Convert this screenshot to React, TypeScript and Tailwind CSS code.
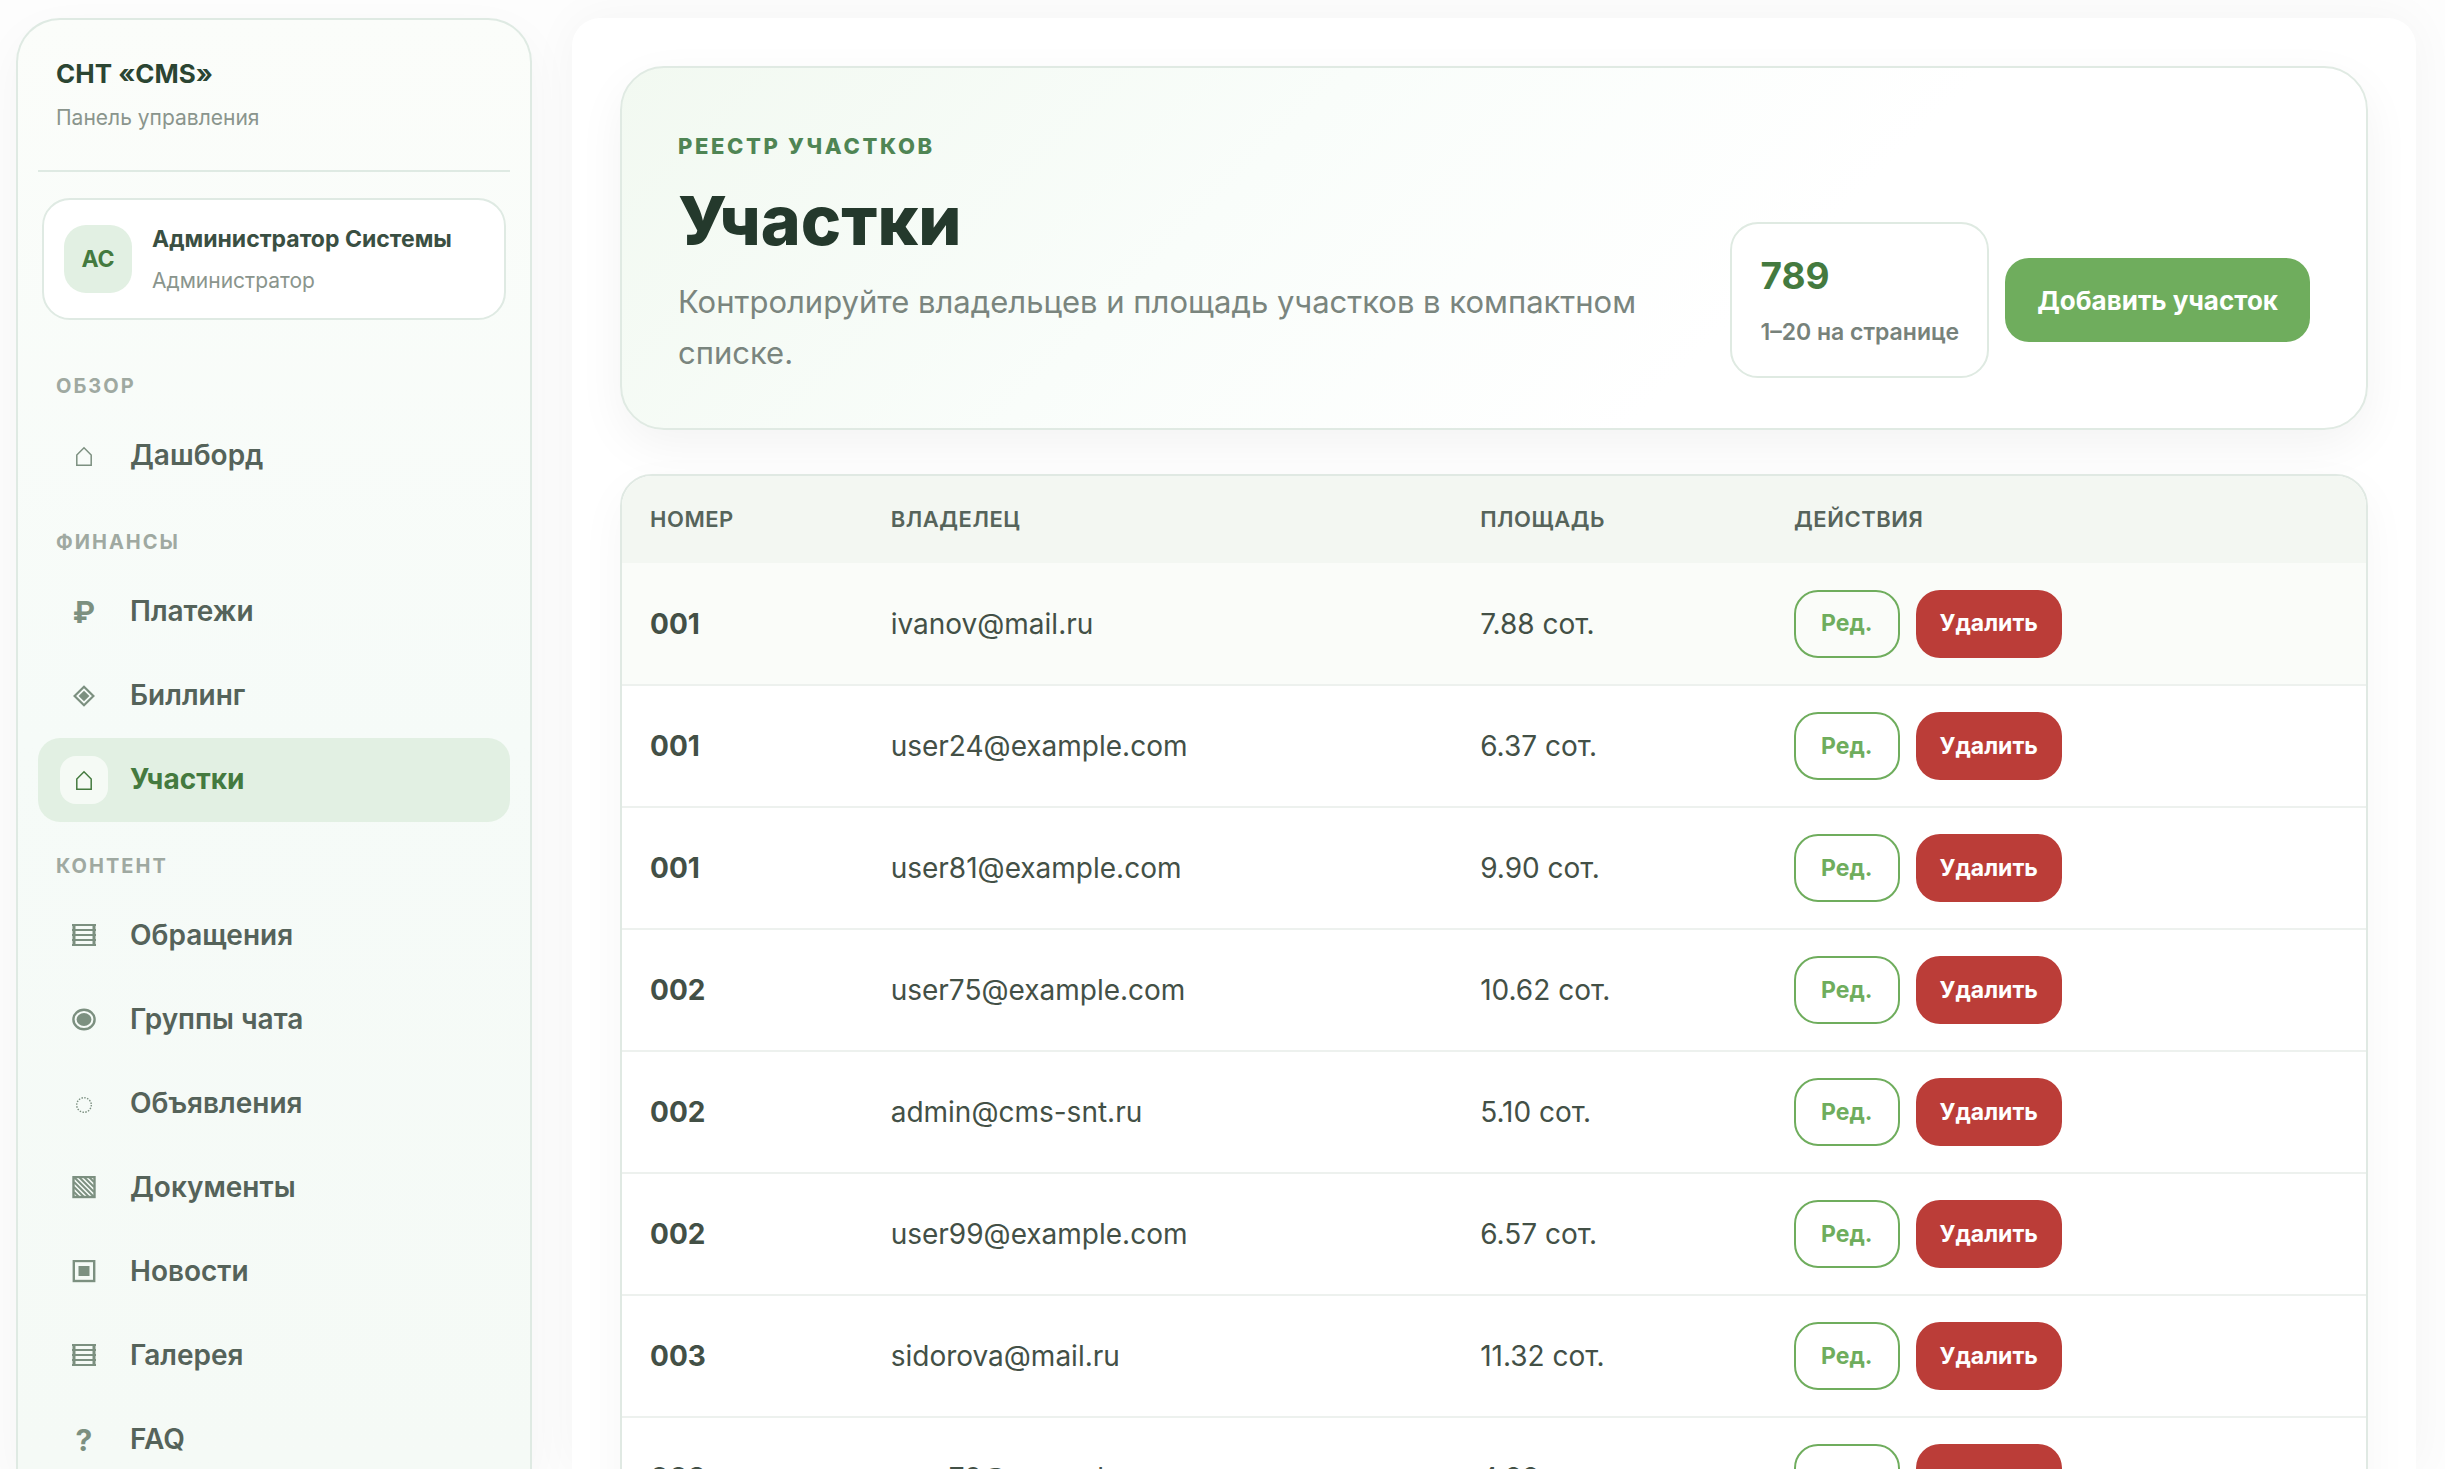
import { useState, type ReactNode } from 'react'

function cn(...xs: (string | false | undefined | null)[]) {
  return xs.filter(Boolean).join(' ')
}

const Glyph = ({ children }: { children: ReactNode }) => (
  <svg viewBox="0 0 24 24" fill="none" stroke="currentColor" className="h-6 w-6">
    {children}
  </svg>
)

const HomeIcon = () => (
  <Glyph>
    <path d="M4.8 21.3V11L12 3.8l7.2 7.2v10.3z" strokeWidth="1.5" />
  </Glyph>
)

const DiamondIcon = () => (
  <Glyph>
    <path d="M12 2.8 21.4 12 12 21.2 2.6 12z" strokeWidth="2.2" />
    <path d="M12 6.8 17.4 12 12 17.2 6.6 12z" fill="currentColor" stroke="none" />
  </Glyph>
)

const LinesIcon = () => (
  <Glyph>
    <path d="M0 0h24v2H0zM0 5h24v2H0zM0 10h24v2H0zM0 15h24v2H0zM0 20h24v2H0zM0.5 0h3v22h-3zM20.5 0h3v22h-3z" fill="currentColor" stroke="none" />
  </Glyph>
)

const TargetIcon = () => (
  <Glyph>
    <ellipse cx="12" cy="11.5" rx="10.6" ry="9.8" strokeWidth="2.4" />
    <ellipse cx="12" cy="11.5" rx="7.4" ry="6.4" fill="currentColor" stroke="none" />
  </Glyph>
)

const DottedIcon = () => (
  <Glyph>
    <circle cx="12" cy="13" r="7.3" strokeWidth="1.4" strokeDasharray="1.5 1.37" />
  </Glyph>
)

const HatchIcon = () => (
  <Glyph>
    <rect x="1.5" y="1" width="21" height="20" strokeWidth="2.4" />
    <path d="M2 1l20 20M2 6l15 15M2 11l10 10M2 16l5 5M7 1l15 15M12 1l10 10M17 1l5 5" strokeWidth="1.9" />
  </Glyph>
)

const SquareIcon = () => (
  <Glyph>
    <rect x="1.8" y="1" width="20.4" height="20" strokeWidth="2.4" />
    <path d="M6.5 6h11v10h-11z" fill="currentColor" stroke="none" />
  </Glyph>
)

interface NavItem {
  id: string
  icon: ReactNode
  label: string
}

interface Plot {
  number: string
  owner: string
  area: string
}

const navSections: { title: string; items: NavItem[] }[] = [
  { title: 'Обзор', items: [{ id: 'dashboard', icon: <HomeIcon />, label: 'Дашборд' }] },
  {
    title: 'Финансы',
    items: [
      { id: 'payments', icon: '₽', label: 'Платежи' },
      { id: 'billing', icon: <DiamondIcon />, label: 'Биллинг' },
      { id: 'plots', icon: <HomeIcon />, label: 'Участки' },
    ],
  },
  {
    title: 'Контент',
    items: [
      { id: 'appeals', icon: <LinesIcon />, label: 'Обращения' },
      { id: 'chats', icon: <TargetIcon />, label: 'Группы чата' },
      { id: 'announcements', icon: <DottedIcon />, label: 'Объявления' },
      { id: 'documents', icon: <HatchIcon />, label: 'Документы' },
      { id: 'news', icon: <SquareIcon />, label: 'Новости' },
      { id: 'gallery', icon: <LinesIcon />, label: 'Галерея' },
      { id: 'faq', icon: '?', label: 'FAQ' },
    ],
  },
]

const plots: Plot[] = [
  { number: '001', owner: 'ivanov@mail.ru', area: '7.88' },
  { number: '001', owner: 'user24@example.com', area: '6.37' },
  { number: '001', owner: 'user81@example.com', area: '9.90' },
  { number: '002', owner: 'user75@example.com', area: '10.62' },
  { number: '002', owner: 'admin@cms-snt.ru', area: '5.10' },
  { number: '002', owner: 'user99@example.com', area: '6.57' },
  { number: '003', owner: 'sidorova@mail.ru', area: '11.32' },
  { number: '003', owner: 'user79@example.com', area: '4.88' },
]

function Sidebar() {
  const [active, setActive] = useState('plots')

  return (
    <aside className="w-[516px] shrink-0 overflow-hidden rounded-t-[44px] border-2 border-b-0 border-[#dfeae3] bg-linear-to-b from-[#fbfdfa] via-[#f6fbf8] via-50% to-[#f5faf6] px-5 pt-5 shadow-[0_16px_48px_rgba(0,0,0,0.04)]">
      <div className="border-b-2 border-[#dfeae3] px-[18px] pt-4 pb-9">
        <div className="text-[26px] leading-9 font-bold text-[#2b4532]">СНТ «CMS»</div>
        <div className="mt-2.5 text-[21px] leading-8 text-[#8a958d]">Панель управления</div>
      </div>

      <div className="mx-1 mt-[26px] flex items-center gap-5 rounded-[28px] border-2 border-[#dfeae3] bg-white px-5 py-[21px]">
        <div className="grid h-[68px] w-[68px] shrink-0 place-items-center rounded-[22px] bg-[#e2f0e3] text-[23px] font-bold text-[#447a3f]">АС</div>
        <div className="min-w-0">
          <div className="text-[23px] leading-9 font-bold text-[#3a4f42]">Администратор Системы</div>
          <div className="mt-2 text-[21px] leading-8 text-[#8a958d]">Администратор</div>
        </div>
      </div>

      <nav className="mt-[22px]">
        {navSections.map((section) => (
          <div key={section.title}>
            <h2 className="px-[18px] pt-[29px] pb-[13px] text-[20px] leading-[30px] font-bold tracking-widest text-[#9fa9a1] uppercase">{section.title}</h2>
            {section.items.map((item) => {
              const on = item.id === active
              return (
                <a
                  key={item.id}
                  href={'#' + item.id}
                  onClick={() => setActive(item.id)}
                  className={cn('flex h-[84px] items-center gap-[22px] rounded-[22px] px-[22px] text-[28px]', on ? 'bg-[#e2f0e3] font-bold text-[#447a3f]' : 'font-semibold text-[#55635a]')}
                >
                  <span
                    aria-hidden="true"
                    className={cn('grid h-12 w-12 place-items-center rounded-2xl text-[30px] leading-none font-bold', on ? 'bg-[#f5faf5] text-[#447a3f]' : 'text-[#7c9080]')}
                  >
                    {item.icon}
                  </span>
                  <span className="pb-0.5">{item.label}</span>
                </a>
              )
            })}
          </div>
        ))}
      </nav>
    </aside>
  )
}

function Hero() {
  return (
    <header className="flex items-end gap-7 rounded-[44px] border-2 border-[#e0eae3] bg-linear-135 from-[#f2f9f1] via-[#f9fdfa] via-35% to-white to-65% px-14 pt-[60px] pb-[50px] shadow-[0_16px_48px_rgba(0,0,0,0.05)]">
      <div className="min-w-0 flex-1">
        <p className="text-[22px] leading-9 font-extrabold tracking-[0.12em] text-[#4f8554] uppercase">Реестр участков</p>
        <h1 className="mt-5 text-[68px] leading-[72px] font-extrabold text-[#24392c]">Участки</h1>
        <p className="mt-5 text-[31px] leading-[51px] text-[#7a857e]">Контролируйте владельцев и площадь участков в компактном списке.</p>
      </div>
      <div className="flex shrink-0 items-center gap-4">
        <div className="rounded-[28px] border-2 border-[#dfeae2] bg-white/80 p-7">
          <div className="text-[37px] leading-[48px] font-bold text-[#447a3f]">789</div>
          <div className="mt-4 text-[23px] leading-8 font-semibold text-[#77827b]">1–20 на странице</div>
        </div>
        <button className="h-[84px] rounded-[24px] bg-[#6fad5d] px-8 text-[26px] font-bold text-white hover:bg-[#629e51]">Добавить участок</button>
      </div>
    </header>
  )
}

function PlotsTable() {
  return (
    <div className="mt-11 overflow-hidden rounded-[32px] border-2 border-[#e0e9e3] bg-white shadow-[0_16px_48px_rgba(0,0,0,0.04)]">
      <table className="w-full table-fixed text-left">
        <thead>
          <tr className="h-[87px] bg-[#f3f7f2] text-[22px] tracking-wide text-[#56645b] uppercase">
            <th className="w-[13.8%] px-7 font-semibold">Номер</th>
            <th className="w-[33.8%] px-7 font-semibold">Владелец</th>
            <th className="w-[18%] px-7 font-semibold">Площадь</th>
            <th className="px-7 font-semibold">Действия</th>
          </tr>
        </thead>
        <tbody>
          {plots.map((p, i) => (
            <tr key={i} className="h-[122px] border-b-2 border-[#edf1ee] text-[28px] text-[#435046] first:bg-[#fafcf9]">
              <td className="px-7 font-bold">{p.number}</td>
              <td className="px-7">{p.owner}</td>
              <td className="px-7">{p.area} сот.</td>
              <td className="px-7">
                <div className="flex gap-4">
                  <button className="h-[68px] rounded-[24px] border-2 border-[#6fad5d] px-[25px] text-[23px] font-bold text-[#6fad5d]">Ред.</button>
                  <button className="h-[68px] rounded-[24px] bg-[#bb3d38] px-6 text-[23px] font-bold text-white">Удалить</button>
                </div>
              </td>
            </tr>
          ))}
        </tbody>
      </table>
    </div>
  )
}

export default function App() {
  return (
    <div className="flex h-screen gap-10 overflow-hidden bg-[#fdfdfd] pt-[18px] pr-[29px] pl-4 font-['Inter',sans-serif]">
      <Sidebar />
      <main className="min-w-0 flex-1 rounded-t-[28px] bg-white p-12 shadow-[0_0_48px_rgba(0,0,0,0.04)]">
        <Hero />
        <PlotsTable />
      </main>
    </div>
  )
}
